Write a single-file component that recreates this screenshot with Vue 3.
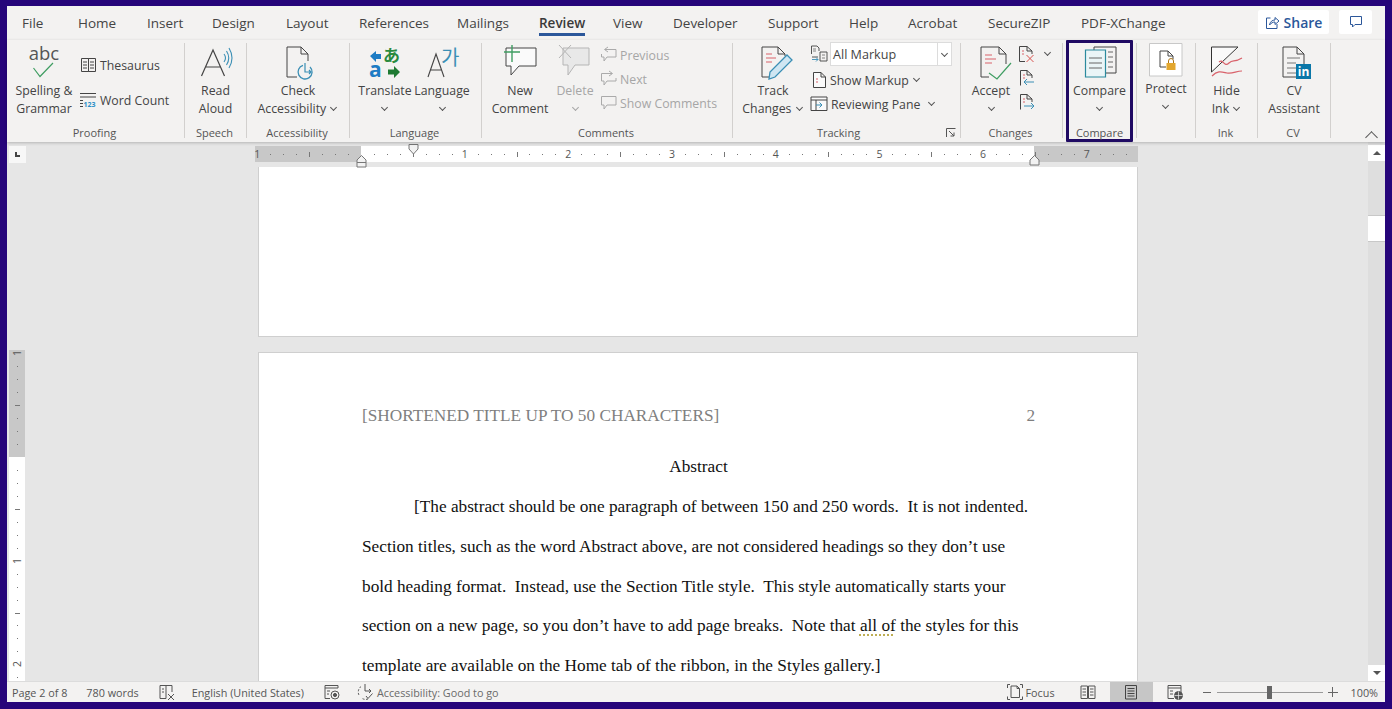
<script setup>
const tabs = [
  { name: "File", w: 56 },
  { name: "Home", w: 69 },
  { name: "Insert", w: 65 },
  { name: "Design", w: 74 },
  { name: "Layout", w: 73 },
  { name: "References", w: 98 },
  { name: "Mailings", w: 82 },
  { name: "Review", w: 74, active: true },
  { name: "View", w: 60 },
  { name: "Developer", w: 95 },
  { name: "Support", w: 81 },
  { name: "Help", w: 59 },
  { name: "Acrobat", w: 80 },
  { name: "SecureZIP", w: 93 },
  { name: "PDF-XChange", w: 120 },
];

// one tick per eighth of an inch, 103.7px to the inch at this zoom
const EIGHTH = 12.96;

function makeTicks(from, to, origin) {
  const out = [];
  for (let n = from; n <= to; n++) {
    if (n === 0) continue;
    let kind = "dot";
    if (n % 8 === 0) kind = "num";
    else if (n % 4 === 0) kind = "line";
    out.push({ n, kind, pos: origin + n * EIGHTH, label: Math.abs(n / 8) });
  }
  return out;
}

const hTicks = makeTicks(-8, 59, 106);
const vTicks = makeTicks(-8, 17, 107);
</script>

<template>
  <div class="frame">
    <!-- tab row -->
    <div class="tabs">
      <div v-for="t in tabs" :key="t.name" class="tab" :style="{ width: t.w + 'px' }">
        <span class="tab-text" :class="{ active: t.active }">{{ t.name }}</span>
      </div>
      <div class="tab-right">
        <div class="share">
          <svg width="15" height="15" viewBox="0 0 15 15" fill="none" stroke="#2b579a" stroke-width="1">
            <path d="M5.5 3H1.5V13.5H12V9" />
            <path d="M4.5 10C5 6.5 7.5 5 10 5V2.5L14 6L10 9.5V7C8 7 6 8 4.5 10Z" />
          </svg>
          <span>Share</span>
        </div>
        <div class="comment-btn">
          <svg width="14" height="14" viewBox="0 0 14 14" fill="none" stroke="#2b579a" stroke-width="1">
            <path d="M1.5 1.5H12.5V9.5H6L3.5 12V9.5H1.5Z" />
          </svg>
        </div>
      </div>
    </div>

    <!-- ribbon -->
    <div class="ribbon">
      <div class="group g-proofing">
        <div class="body">
          <div class="big w74">
            <svg class="ico" viewBox="0 0 36 36" fill="none">
              <text x="18" y="16" text-anchor="middle" class="ico-abc">abc</text>
              <path d="M7.5 24L14 32.5L27 19" stroke="#3f9d62" stroke-width="1.2" />
            </svg>
            <div class="lbl">Spelling &amp;<br />Grammar</div>
          </div>
          <div class="small-col proof-col">
            <div class="row">
              <svg class="sico" viewBox="0 0 18 18" fill="none" stroke="#444" stroke-width="1">
                <path d="M1.5 2.5H8.5V15.5H1.5ZM8.5 2.5H15.5V15.5H8.5Z" />
                <path d="M3 6H7M3 9H7M10 6H14M10 9H14M3 12H7M10 12H14" />
              </svg>
              <span>Thesaurus</span>
            </div>
            <div class="row">
              <svg class="sico" viewBox="0 0 18 18" fill="none" stroke="#444" stroke-width="1">
                <path d="M0 2.5H16M0 6H16M0 9.5H3M0 12.5H3M0 15.5H3" />
                <text x="3.5" y="16" class="ico-123">123</text>
              </svg>
              <span>Word Count</span>
            </div>
          </div>
        </div>
        <div class="glabel">Proofing</div>
      </div>
      <div class="sep"></div>

      <div class="group g-speech">
        <div class="body">
          <div class="big wfull">
            <svg class="ico" viewBox="0 0 36 36" fill="none">
              <path d="M3.5 32L15 6L26.5 32M7.5 23H22.5" stroke="#444" stroke-width="1.2" />
              <path d="M26 10Q29 14 26 18M28.5 7Q33 14 28.5 21M31 4Q37 14 31 24" stroke="#3b8fb5" stroke-width="1.1" />
            </svg>
            <div class="lbl">Read<br />Aloud</div>
          </div>
        </div>
        <div class="glabel">Speech</div>
      </div>
      <div class="sep"></div>

      <div class="group g-access">
        <div class="body">
          <div class="big wfull">
            <svg class="ico" viewBox="0 0 36 36" fill="none">
              <path d="M17 33H7V3H21L28 10V17M21 3V10H28" stroke="#444" />
              <path d="M30 23A7 7 0 1 1 23 21.3" stroke="#3b8fb5" stroke-width="1.3" />
              <path d="M25 19V28H31M29 26L31 28L29 30" stroke="#3b8fb5" stroke-width="1.2" />
            </svg>
            <div class="lbl">Check<br />Accessibility <i class="chev"></i></div>
          </div>
        </div>
        <div class="glabel">Accessibility</div>
      </div>
      <div class="sep"></div>

      <div class="group g-language">
        <div class="body">
          <div class="big w54">
            <svg class="ico" viewBox="0 0 36 36" fill="none">
              <path d="M3 12L9 7V10H14V15H9V18Z" fill="#1d7cc4" />
              <text x="16" y="18" class="ico-ja">あ</text>
              <text x="2" y="33" class="ico-a">a</text>
              <path d="M33 28L27 34V30.500H21V25.500H27V22Z" fill="#1f7a33" />
            </svg>
            <div class="lbl">Translate<br /><i class="chev"></i></div>
          </div>
          <div class="big w58">
            <svg class="ico" viewBox="0 0 36 36" fill="none">
              <path d="M4 33L12 10L20 33M6.500 26H17.500" stroke="#444" stroke-width="1.1" />
              <text x="17" y="21" class="ico-ko">가</text>
            </svg>
            <div class="lbl">Language<br /><i class="chev"></i></div>
          </div>
        </div>
        <div class="glabel">Language</div>
      </div>
      <div class="sep"></div>

      <div class="group g-comments">
        <div class="body">
          <div class="big w76">
            <svg class="ico" viewBox="0 0 36 36" fill="none">
              <path d="M4 4H34V22H17L9 31V22H4Z" fill="#fafafa" stroke="#444" />
              <path d="M10 1V18M2 8H18" stroke="#3f9d62" stroke-width="1.4" />
            </svg>
            <div class="lbl">New<br />Comment</div>
          </div>
          <div class="big w34 off">
            <svg class="ico" viewBox="0 0 36 36" fill="none">
              <path d="M6 4H32V21H18L11 31V21H6Z" fill="#e8e8e8" stroke="#b5b5b5" />
              <path d="M2 1L14 14M14 1L2 14" stroke="#b5b5b5" />
            </svg>
            <div class="lbl">Delete<br /><i class="chev"></i></div>
          </div>
          <div class="small-col comment-col off">
            <div class="row">
              <svg class="sico" viewBox="0 0 18 18" fill="none" stroke="#aaa">
                <path d="M5 3.500H16V11H7L4 15V11H1.500V8" />
                <path d="M8 1L4.500 3.500L8 6" />
              </svg>
              <span>Previous</span>
            </div>
            <div class="row">
              <svg class="sico" viewBox="0 0 18 18" fill="none" stroke="#aaa">
                <path d="M12 3.500H1.500V11H4V15L7 11H16V8" />
                <path d="M9 1L12.500 3.500L9 6" />
              </svg>
              <span>Next</span>
            </div>
            <div class="row">
              <svg class="sico" viewBox="0 0 18 18" fill="none" stroke="#aaa">
                <path d="M1.500 2.500H16V11H7L4 15V11H1.500Z" />
              </svg>
              <span>Show Comments</span>
            </div>
          </div>
        </div>
        <div class="glabel">Comments</div>
      </div>
      <div class="sep"></div>

      <div class="group g-tracking">
        <div class="body">
          <div class="big w80">
            <svg class="ico" viewBox="0 0 36 36" fill="none">
              <path d="M14 33H7V3H23L30 10V12M23 3V10H30" stroke="#444" />
              <path d="M11 10H17M11 14H21M11 18H17" stroke="#d9626b" />
              <path d="M32 11L37 16L20 33L14 35L15 28Z" fill="#cfe6f2" stroke="#3b8fb5" stroke-width="1.3" />
            </svg>
            <div class="lbl">Track<br />Changes <i class="chev"></i></div>
          </div>
          <div class="small-col track-col">
            <div class="row markup-row">
              <svg class="sico" viewBox="0 0 18 18" fill="none" stroke="#444" stroke-width="0.9">
                <path d="M1.500 9V1H7L9 3V6M2 12H8" />
                <path d="M10 7H17V16H10Z" />
                <path d="M3 4H6M3 6H6M12 10H15M12 13H15" stroke="#777" />
                <path d="M2 14.500H8M6 12.500L8 14.500L6 16.500" stroke="#3b8fb5" />
              </svg>
              <div class="select">
                <span class="sel-text">All Markup</span>
                <span class="sel-arrow"><i class="chev dark"></i></span>
              </div>
            </div>
            <div class="row show-row">
              <svg class="sico" viewBox="0 0 18 18" fill="none" stroke="#444">
                <path d="M3.500 16.500V1.500H11L15.500 6V16.500ZM11 1.500V6H15.500" fill="#fafafa" />
                <path d="M6 8H8M6 11H8" stroke="#d9626b" />
              </svg>
              <span>Show Markup</span><i class="chev gap5"></i>
            </div>
            <div class="row pane-row">
              <svg class="sico" viewBox="0 0 18 18" fill="none" stroke="#444">
                <path d="M1 2H17V15.500H1ZM1 5H17M6 5V15.500" fill="#fafafa" />
                <path d="M6 10H12M9.500 7.500L12 10L9.500 12.500" stroke="#3b8fb5" />
              </svg>
              <span>Reviewing Pane</span><i class="chev gap10"></i>
            </div>
          </div>
        </div>
        <div class="glabel">
          Tracking
          <svg class="launcher" width="10" height="10" viewBox="0 0 10 10" fill="none" stroke="#555">
            <path d="M0.500 9V0.500H9.500M3 3L8 8M8 4.500V8H4.500" />
          </svg>
        </div>
      </div>
      <div class="sep"></div>

      <div class="group g-changes">
        <div class="body">
          <div class="big w60">
            <svg class="ico" viewBox="0 0 36 36" fill="none">
              <path d="M16 33H8V3H26L33 10V20M26 3V10H33" stroke="#444" />
              <path d="M12 11H19M12 15H23M12 19H19" stroke="#d9626b" />
              <path d="M16 29L24 35L38 19" stroke="#3f9d62" stroke-width="1.2" />
            </svg>
            <div class="lbl">Accept<br /><i class="chev"></i></div>
          </div>
          <div class="small-col change-col">
            <div class="row">
              <svg class="sico" viewBox="0 0 18 18" fill="none" stroke="#444">
                <path d="M1.500 1.500H9L14 6V9M1.500 1.500V16.500H7M9 1.500V6H14" />
                <path d="M4 6H6M4 9H6" stroke="#d9626b" />
                <path d="M8.500 10L15.500 17M15.500 10L8.500 17" stroke="#d9534f" />
              </svg>
              <i class="chev gap8"></i>
            </div>
            <div class="row">
              <svg class="sico" viewBox="0 0 18 18" fill="none" stroke="#444">
                <path d="M2.500 16.500V1.500H9L14 6V9M9 1.500V6H14" />
                <path d="M5 6H7M5 9H7" stroke="#d9626b" />
                <path d="M16 13H6M9 10L6 13L9 16" stroke="#3b8fb5" />
              </svg>
            </div>
            <div class="row">
              <svg class="sico" viewBox="0 0 18 18" fill="none" stroke="#444">
                <path d="M2.500 16.500V1.500H9L14 6V9M9 1.500V6H14" />
                <path d="M5 6H7M5 9H7" stroke="#d9626b" />
                <path d="M6 13H16M13 10L16 13L13 16" stroke="#3b8fb5" />
              </svg>
            </div>
          </div>
        </div>
        <div class="glabel">Changes</div>
      </div>
      <div class="sep"></div>

      <div class="group g-compare">
        <div class="body">
          <div class="big wfull">
            <svg class="ico" viewBox="0 0 36 36" fill="none">
              <path d="M12 6V3H34V29H24" stroke="#444" />
              <path d="M26 8H31M26 13H31M26 18H31M26 23H31" stroke="#666" />
              <path d="M3.500 6H23.500V33H3.500Z" fill="#eaf5f7" stroke="#2b8a9e" stroke-width="1.2" />
              <path d="M7 14H20M7 19H20M7 24H20" stroke="#666" />
            </svg>
            <div class="lbl">Compare<br /><i class="chev"></i></div>
          </div>
        </div>
        <div class="glabel">Compare</div>
      </div>
      <div class="sep"></div>

      <div class="group g-protect">
        <div class="body">
          <div class="big wfull up2">
            <svg class="ico" viewBox="0 0 36 36" fill="none">
              <path d="M1.500 -0.500H34V32H1.500Z" fill="#fff" stroke="#c8c8c8" />
              <path d="M18 23H12V7H20L25 12V15M20 7V12H25" stroke="#444" />
              <rect x="18.500" y="19" width="9" height="7" fill="#e3a72f" />
              <path d="M20.500 19V17A2.500 2.500 0 0 1 25.500 17V19" stroke="#a8741a" />
            </svg>
            <div class="lbl">Protect<br /><i class="chev"></i></div>
          </div>
        </div>
        <div class="glabel"></div>
      </div>
      <div class="sep"></div>

      <div class="group g-ink">
        <div class="body">
          <div class="big wfull">
            <svg class="ico" viewBox="0 0 36 36" fill="none">
              <path d="M2.500 3H29L2.500 28Z" fill="#fafafa" stroke="#333" />
              <path d="M10 18C14 14 15 24 20 19C24 15 25 19 33 14" stroke="#d9626b" stroke-width="1.2" />
              <path d="M3 32C9 26 13 28 18 29C24 30 27 27 33 27" stroke="#d9626b" stroke-width="1.2" />
            </svg>
            <div class="lbl">Hide<br />Ink <i class="chev"></i></div>
          </div>
        </div>
        <div class="glabel">Ink</div>
      </div>
      <div class="sep"></div>

      <div class="group g-cv">
        <div class="body">
          <div class="big wfull">
            <svg class="ico" viewBox="0 0 36 36" fill="none">
              <path d="M20 33H7V3H21L28 10V20M21 3V10H28" stroke="#444" />
              <path d="M11 14H24M11 19H20M11 24H20M11 29H20" stroke="#777" />
              <rect x="20" y="20" width="15" height="15" fill="#0a77a8" />
              <text x="27.500" y="32" text-anchor="middle" class="ico-in">in</text>
            </svg>
            <div class="lbl">CV<br />Assistant</div>
          </div>
        </div>
        <div class="glabel">CV</div>
      </div>
      <div class="sep"></div>

      <div class="collapse"><i class="chev up"></i></div>
    </div>

    <!-- document area -->
    <div class="work">
      <div class="work-main">
        <div class="ruler-row">
          <div class="tab-sel"><span class="tab-mark"></span></div>
          <div class="ruler">
            <div class="r-grey left"></div>
            <div class="r-white"></div>
            <div class="r-grey right"></div>
            <template v-for="t in hTicks" :key="t.n">
              <span v-if="t.kind === 'num'" class="hnum" :style="{ left: t.pos + 'px' }">{{ t.label }}</span>
              <span v-else :class="t.kind === 'line' ? 'hline' : 'hdot'" :style="{ left: t.pos + 'px' }"></span>
            </template>
            <svg class="marker m-first" width="11" height="11" viewBox="0 0 11 11"><path d="M1 0.500H10V5L5.500 10L1 5Z" fill="#f2f2f2" stroke="#777" /></svg>
            <svg class="marker m-hang" width="11" height="13" viewBox="0 0 11 13"><path d="M5.500 0.500L10 5V12H1V5ZM1 7.500H10" fill="#f2f2f2" stroke="#777" /></svg>
            <svg class="marker m-right" width="11" height="11" viewBox="0 0 11 11"><path d="M5.500 0.500L10 5V10H1V5Z" fill="#f2f2f2" stroke="#777" /></svg>
          </div>
        </div>

        <div class="doc-wrap">
          <div class="vstrip">
            <div class="vruler">
              <div class="v-grey"></div>
              <template v-for="t in vTicks" :key="t.n">
                <span v-if="t.kind === 'num'" class="vnum" :style="{ top: t.pos + 'px' }">{{ t.label }}</span>
                <span v-else :class="t.kind === 'line' ? 'vline' : 'vdot'" :style="{ top: t.pos + 'px' }"></span>
              </template>
            </div>
          </div>
          <div class="pages">
            <div class="page page-one"></div>
            <div class="page page-two">
              <div class="running">
                <span>[SHORTENED TITLE UP TO 50 CHARACTERS]</span>
                <span>2</span>
              </div>
              <div class="abs-title">Abstract</div>
              <div class="line indent">[The abstract should be one paragraph of between 150 and 250 words.&nbsp; It is not indented.</div>
              <div class="line">Section titles, such as the word Abstract above, are not considered headings so they don’t use</div>
              <div class="line">bold heading format.&nbsp; Instead, use the Section Title style.&nbsp; This style automatically starts your</div>
              <div class="line">section on a new page, so you don’t have to add page breaks.&nbsp; Note that <span class="squiggle">all of</span> the styles for this</div>
              <div class="line">template are available on the Home tab of the ribbon, in the Styles gallery.]</div>
            </div>
          </div>
        </div>
      </div>

      <div class="scrollbar">
        <div class="sb-btn"><i class="tri"></i></div>
        <div class="sb-thumb"></div>
        <div class="sb-btn bottom"><i class="tri down"></i></div>
      </div>
    </div>

    <!-- status bar -->
    <div class="status">
      <span class="st-page">Page 2 of 8</span>
      <span class="st-words">780 words</span>
      <svg class="st-ico st-proof" viewBox="0 0 16 16" fill="none" stroke="#555">
        <path d="M7 14.500H1V1.500H13V8M7 1.500V14.500M3 5H5M3 8H5" />
        <path d="M9 10L15 16M15 10L9 16" />
      </svg>
      <span class="st-lang">English (United States)</span>
      <svg class="st-ico st-macro" viewBox="0 0 16 16" fill="none" stroke="#555">
        <path d="M1 1.500H14V4H1ZM1 4V14.500H6M3 7H6M3 10H5" />
        <circle cx="11" cy="11" r="4" />
        <circle cx="11" cy="11" r="1.600" fill="#555" />
      </svg>
      <svg class="st-ico st-acc" viewBox="0 0 16 16" fill="none" stroke="#555">
        <path d="M4 2.500A7 7 0 0 0 2.500 12M11 15A7 7 0 0 1 4.500 14" stroke-dasharray="2 1.500" />
        <path d="M8 0V7H14M12 5L14 7L12 9" />
        <path d="M9 12L11 14.500L15.500 9.500" />
      </svg>
      <span class="st-acctext">Accessibility: Good to go</span>

      <div class="st-right">
        <svg class="st-ico" viewBox="0 0 16 16" fill="none" stroke="#555">
          <path d="M0.500 4V0.500H3M13 0.500H15.500V4M15.500 12.500V15.500H13M3 15.500H0.500V12.500" />
          <path d="M4 2H10L12.500 4.500V13.500H4ZM10 2V4.500H12.500" />
        </svg>
        <span class="st-focus">Focus</span>
        <svg class="st-ico st-read" viewBox="0 0 16 16" fill="none" stroke="#555">
          <path d="M1 2H7.500V14.500H1ZM8.500 2H15V14.500H8.500Z" />
          <path d="M2.500 5H6M2.500 8H6M2.500 11H6M10 5H13.500M10 8H13.500M10 11H13.500" />
        </svg>
        <div class="st-print">
          <svg class="st-ico" viewBox="0 0 16 16" fill="none" stroke="#444">
            <path d="M2.500 1.500H13.500V15H2.500Z" />
            <path d="M4.500 4.500H11.500M4.500 7H11.500M4.500 9.500H11.500M4.500 12H11.500" />
          </svg>
        </div>
        <svg class="st-ico st-web" viewBox="0 0 16 16" fill="none" stroke="#555">
          <path d="M1 1.500H14V8M1 4H14M1 1.500V14.500H7M3 7H6M3 10H6" />
          <circle cx="11.500" cy="11.500" r="4" fill="#555" />
          <path d="M11.500 7.500V15.500M7.500 11.500H15.500" stroke="#eee" stroke-width="0.700" />
        </svg>
        <span class="z-minus"></span>
        <div class="slider"><span class="slider-thumb"></span></div>
        <span class="z-plus"></span>
        <span class="st-zoom">100%</span>
      </div>
    </div>
  </div>
</template>

<style>
html,
body {
  margin: 0;
  overflow: hidden;
}
.ico-abc {
  font: 18.5px "Open Sans", sans-serif;
  fill: #555;
}
.ico-123 {
  font: 700 7px "Open Sans", sans-serif;
  fill: #2d8fc7;
  stroke: none;
}
.ico-ja {
  font: 700 17px "Noto Sans CJK JP", sans-serif;
  fill: #2a8a3e;
}
.ico-a {
  font: 700 21px "Open Sans", sans-serif;
  fill: #1d7cc4;
}
.ico-ko {
  font: 20px "Noto Sans CJK KR", sans-serif;
  fill: #3b8fb5;
}
.ico-in {
  font: 700 12px "Open Sans", sans-serif;
  fill: #fff;
}
</style>

<style scoped>
.frame {
  box-sizing: border-box;
  width: 1392px;
  height: 709px;
  padding: 6px 7px 7px;
  background: #26057a;
  display: flex;
  flex-direction: column;
  font-family: "Open Sans", "Noto Sans", sans-serif;
  color: #444;
  overflow: hidden;
}

/* tabs */
.tabs {
  height: 34px;
  flex: none;
  background: #f3f2f1;
  display: flex;
  padding-left: 15px;
  font-size: 13.5px;
}
.tab {
  padding-top: 8px;
  flex: none;
}
.tab-text {
  display: inline-block;
  line-height: 18px;
  padding-bottom: 1px;
}
.tab-text.active {
  font-weight: 600;
  color: #3a3a3a;
  border-bottom: 3px solid #2b579a;
}
.tab-right {
  margin-left: auto;
  display: flex;
  gap: 10px;
  padding: 4px 13px 0 0;
}
.share {
  width: 71px;
  height: 24px;
  background: #fff;
  border-radius: 2px;
  display: flex;
  align-items: center;
  justify-content: center;
  gap: 4px;
  color: #2b579a;
  font-weight: 600;
  font-size: 14px;
}
.comment-btn {
  width: 33px;
  height: 24px;
  background: #fff;
  border-radius: 2px;
  display: flex;
  align-items: center;
  justify-content: center;
}

/* ribbon */
.ribbon {
  height: 102px;
  flex: none;
  background: #f3f2f1;
  display: flex;
  position: relative;
  z-index: 2;
  box-shadow: 0 1px 3px rgba(0, 0, 0, 0.22);
  font-size: 12.3px;
}
.group {
  display: flex;
  flex-direction: column;
  flex: none;
}
.body {
  flex: 1;
  display: flex;
  min-height: 0;
}
.glabel {
  height: 16px;
  line-height: 16px;
  margin-bottom: 1px;
  padding-right: 2px;
  text-align: center;
  font-size: 11px;
  color: #555;
  position: relative;
}
.launcher {
  position: absolute;
  right: 4px;
  top: 3px;
}
.sep {
  width: 1px;
  flex: none;
  margin: 3px 0 4px;
  background: #d2d0ce;
}
.g-proofing { width: 177px; }
.g-speech { width: 61px; }
.g-access { width: 102px; }
.g-language { width: 131px; }
.g-comments { width: 250px; }
.g-tracking { width: 227px; }
.g-tracking .glabel { padding-right: 16px; }
.g-changes { width: 101px; }
.g-compare {
  box-sizing: border-box;
  width: 67px;
  margin: 0 3px;
  border: 3px solid #1f0a63;
  border-radius: 1px;
}
.g-compare .big { margin-top: -3px; }
.g-compare .glabel { margin-bottom: -2px; padding-right: 0; }
.g-protect { width: 58px; }
.g-ink { width: 61px; }
.g-cv { width: 72px; }
.g-language .body { padding-left: 8px; gap: 1px; }

.big {
  flex: none;
  display: flex;
  flex-direction: column;
  align-items: center;
  padding-top: 4px;
}
.w34 { width: 34px; }
.w54 { width: 54px; }
.w58 { width: 58px; }
.w60 { width: 60px; }
.w74 { width: 74px; }
.w76 { width: 76px; }
.w80 { width: 80px; }
.wfull { width: 100%; }
.ico {
  width: 36px;
  height: 36px;
  display: block;
  overflow: visible;
}
.sico {
  width: 18px;
  height: 18px;
  flex: none;
  overflow: visible;
}
.lbl {
  margin-top: 2px;
  line-height: 17.5px;
  text-align: center;
  white-space: nowrap;
}
.up2 .lbl { margin-top: 0; }
.off,
.off .lbl { color: #a6a6a6; }
.off .chev { border-color: #a6a6a6; }

.chev {
  display: inline-block;
  width: 4px;
  height: 4px;
  border-right: 1px solid #555;
  border-bottom: 1px solid #555;
  transform: rotate(45deg);
  margin: 0 2px 3px;
  vertical-align: middle;
}
.chev.up {
  width: 8px;
  height: 8px;
  transform: rotate(225deg);
  margin: 0;
}
.gap5 { margin-left: 3px; }
.gap10 { margin-left: 6px; }
.gap8 { margin-left: 6px; }

.small-col {
  display: flex;
  flex-direction: column;
}
.row {
  display: flex;
  align-items: center;
  height: 24px;
  white-space: nowrap;
  gap: 3px;
}
.proof-col {
  margin: 13px 0 0 -1px;
  gap: 11px;
}
.proof-col .row { gap: 2px; }
.comment-col { margin: 3px 0 0 8px; }
.comment-col .row { gap: 2px; }
.track-col {
  margin: 2px 0 0 -3px;
}
.markup-row { margin-bottom: 2px; gap: 2px; font-size: 12.6px; }
.show-row { gap: 2px; }
.select {
  width: 122px;
  height: 24px;
  box-sizing: border-box;
  background: #fff;
  border: 1px solid #dcdcdc;
  display: flex;
  align-items: center;
}
.sel-text {
  flex: 1;
  padding-left: 2px;
}
.sel-arrow {
  width: 13px;
  height: 100%;
  border-left: 1px solid #dcdcdc;
  display: flex;
  align-items: center;
  justify-content: center;
}
.chev.dark { margin: 0 0 2px; }
.change-col { margin: 2px 0 0 -3px; }

.collapse {
  margin-left: auto;
  margin-right: 9px;
  align-self: flex-end;
  height: 10px;
  padding-bottom: 4px;
}

/* work area */
.work {
  height: 539px;
  flex: none;
  display: flex;
  background: #e6e6e6;
}
.work-main {
  width: 1361px;
  flex: none;
  display: flex;
  flex-direction: column;
  overflow: hidden;
}
.ruler-row {
  height: 25px;
  flex: none;
  display: flex;
  padding-top: 4px;
  box-sizing: border-box;
}
.tab-sel {
  width: 17px;
  height: 17px;
  margin-left: 2px;
  background: #f7f7f7;
  position: relative;
}
.tab-mark {
  position: absolute;
  left: 6px;
  top: 6px;
  width: 5px;
  height: 5px;
  border-left: 2px solid #444;
  border-bottom: 2px solid #444;
  box-sizing: border-box;
}
.ruler {
  width: 883px;
  height: 16px;
  margin-left: 229px;
  position: relative;
  display: flex;
  font-size: 10.500px;
  color: #555;
}
.r-grey { background: #c8c8c8; }
.r-grey.left { width: 106px; }
.r-grey.right { width: 104px; }
.r-white {
  width: 673px;
  background: #fff;
}
.hnum {
  position: absolute;
  top: 0;
  line-height: 16px;
  transform: translateX(-50%);
}
.hdot,
.hline {
  position: absolute;
  width: 1px;
  background: #777;
}
.hdot { top: 8px; height: 1px; }
.hline { top: 6px; height: 5px; }
.marker {
  position: absolute;
  display: block;
}
.m-first { left: 153px; top: -2px; }
.m-hang { left: 100.500px; top: 9px; }
.m-right { left: 774px; top: 9px; }

.doc-wrap {
  flex: 1;
  display: flex;
  min-height: 0;
}
.vstrip {
  width: 19px;
  flex: none;
  padding: 183px 0 0 2px;
  box-sizing: border-box;
}
.vruler {
  width: 16px;
  height: 331px;
  background: #fff;
  position: relative;
  font-size: 10.500px;
  color: #555;
}
.v-grey {
  height: 107px;
  background: #c8c8c8;
}
.vnum {
  position: absolute;
  left: 0;
  width: 16px;
  line-height: 12px;
  text-align: center;
  transform: translateY(-50%) rotate(-90deg);
}
.vdot,
.vline {
  position: absolute;
  height: 1px;
  background: #777;
}
.vdot { left: 8px; width: 1px; }
.vline { left: 6px; width: 5px; }

.pages {
  padding-left: 232px;
  display: flex;
  flex-direction: column;
  gap: 15px;
}
.page {
  box-sizing: border-box;
  width: 880px;
  flex: none;
  background: #fff;
  border: 1px solid #cfcfcf;
  font-family: "Liberation Serif", "Times New Roman", serif;
  font-size: 17.25px;
  color: #111;
}
.page-one {
  height: 170px;
  border-top: 0;
}
.page-two {
  height: 400px;
  padding: 53px 102px 0 103px;
  white-space: nowrap;
}
.running {
  display: flex;
  justify-content: space-between;
  line-height: 20px;
  color: #7f7f7f;
}
.abs-title {
  margin-top: 21px;
  line-height: 40px;
  text-align: center;
}
.line { line-height: 39.800px; }
.indent { text-indent: 52px; }
.squiggle {
  text-decoration: underline dotted #b5a23a;
  text-underline-offset: 3px;
}

.scrollbar {
  width: 17px;
  flex: none;
  padding-top: 3px;
  background: #dedede;
  display: flex;
  flex-direction: column;
  box-sizing: border-box;
}
.sb-btn {
  height: 16px;
  background: #fff;
  display: flex;
  align-items: center;
  justify-content: center;
  flex: none;
}
.sb-btn.bottom { margin-top: auto; }
.tri {
  width: 0;
  height: 0;
  border-left: 4px solid transparent;
  border-right: 4px solid transparent;
  border-bottom: 4px solid #555;
}
.tri.down {
  border-bottom: 0;
  border-top: 4px solid #555;
}
.sb-thumb {
  height: 27px;
  margin-top: 54px;
  background: #fff;
  border-top: 1px solid #c8c8c8;
  border-bottom: 1px solid #c8c8c8;
  box-sizing: border-box;
  flex: none;
}

/* status bar */
.status {
  height: 21px;
  flex: none;
  background: #f3f2f1;
  display: flex;
  align-items: center;
  padding-left: 5px;
  font-size: 10.800px;
  color: #555;
  white-space: nowrap;
  border-top: 1px solid #dcdcdc;
  box-sizing: border-box;
}
.st-ico {
  width: 16px;
  height: 16px;
  flex: none;
}
.st-words { margin-left: 19px; }
.st-proof { margin-left: 20px; }
.st-lang { margin-left: 17px; }
.st-macro { margin-left: 20px; }
.st-acc { margin-left: 17px; }
.st-acctext { margin-left: 4px; color: #6a6a6a; }
.st-right {
  margin-left: auto;
  display: flex;
  align-items: center;
  height: 100%;
}
.st-focus { margin-left: 3px; }
.st-read { margin-left: 25px; }
.st-print {
  width: 43px;
  height: 100%;
  margin-left: 14px;
  background: #c6c6c6;
  display: flex;
  align-items: center;
  justify-content: center;
}
.st-web { margin-left: 14px; }
.z-minus {
  width: 8px;
  height: 1px;
  margin-left: 20px;
  background: #666;
}
.slider {
  width: 106px;
  height: 1px;
  margin-left: 6px;
  background: #999;
  position: relative;
}
.slider-thumb {
  position: absolute;
  left: 50px;
  top: -6px;
  width: 5px;
  height: 13px;
  background: #666;
}
.z-plus {
  width: 10px;
  height: 10px;
  margin-left: 5px;
  background: linear-gradient(#666, #666) center / 100% 1px no-repeat,
    linear-gradient(#666, #666) center / 1px 100% no-repeat;
}
.st-zoom { margin: 0 7px 0 13px; }
</style>
